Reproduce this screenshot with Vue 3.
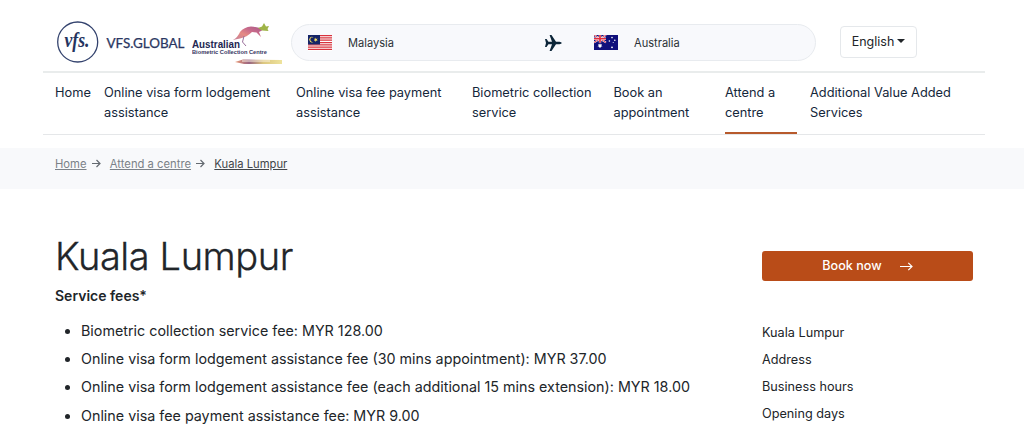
<script setup>
const nav = [
  { lines: ['Home'], width: 49 },
  { lines: ['Online visa form lodgement', 'assistance'], width: 192 },
  { lines: ['Online visa fee payment', 'assistance'], width: 176 },
  { lines: ['Biometric collection', 'service'], width: 141.5 },
  { lines: ['Book an', 'appointment'], width: 111.5 },
  { lines: ['Attend a', 'centre'], width: 85, active: true },
  { lines: ['Additional Value Added', 'Services'], width: 175 }
]
const fees = [
  'Biometric collection service fee: MYR 128.00',
  'Online visa form lodgement assistance fee (30 mins appointment): MYR 37.00',
  'Online visa form lodgement assistance fee (each additional 15 mins extension): MYR 18.00',
  'Online visa fee payment assistance fee: MYR 9.00'
]
const links = ['Kuala Lumpur', 'Address', 'Business hours', 'Opening days']
</script>

<template>
  <div class="page">
    <header class="top">
      <svg class="vfs" width="132" height="46" viewBox="0 0 132 46">
        <circle cx="21.7" cy="23" r="20" fill="#fff" stroke="#34436e" stroke-width="1.3" />
        <text x="8.5" y="28" class="script" textLength="25" lengthAdjust="spacingAndGlyphs">vfs.</text>
        <text x="50.5" y="28.5" class="brand" textLength="78" lengthAdjust="spacingAndGlyphs">VFS.GLOBAL</text>
      </svg>
      <svg class="abcc" width="94" height="46" viewBox="0 0 94 46">
        <defs>
          <linearGradient id="roo" x1="0" x2="1" y1="1" y2="0">
            <stop offset="0" stop-color="#c4809b" />
            <stop offset=".4" stop-color="#e58a84" />
            <stop offset=".65" stop-color="#c96b8b" />
            <stop offset="1" stop-color="#a85a87" />
          </linearGradient>
          <linearGradient id="tail" x1="0" x2="1">
            <stop offset="0" stop-color="#eb9b78" />
            <stop offset=".3" stop-color="#996582" />
            <stop offset=".6" stop-color="#dcc77f" />
            <stop offset="1" stop-color="#eee39d" />
          </linearGradient>
        </defs>
        <path d="M41 20 Q46 17 48 12 Q52 7 59 6.5 Q65 7 69 8.5 L70 10.5 L67 12 L69 17 L64.5 12.5 L60 12 Q55 17 48 18.5 Q44 19 41 20 Z" fill="url(#roo)" />
        <path d="M52 16 L50.5 22 L54 26" fill="none" stroke="#9a6f9b" stroke-width="1" />
        <path d="M66 8 L70 6.5 L72 3 L74 6.5 L77 6 L75.5 9 L76.5 11 L70 10.5 Z" fill="#9fb447" />
        <text x="0" y="27.5" class="au" textLength="48" lengthAdjust="spacingAndGlyphs">Australian</text>
        <text x="0" y="33.5" class="bio" textLength="75" lengthAdjust="spacingAndGlyphs">Biometric Collection Centre</text>
        <path d="M43 42 L51 39.5 L90 40 V44 L52 44 Z" fill="url(#tail)" />
        <path d="M50 41 H78" stroke="#fbf2e3" />
      </svg>
      <div class="route">
        <svg class="flag" width="24" height="16" viewBox="0 0 24 16">
          <rect width="24" height="16" fill="#fff" />
          <path d="M0 .6H24M0 2.9H24M0 5.2H24M0 7.5H24M0 9.8H24M0 12.1H24M0 14.4H24" stroke="#d8323d" stroke-width="1.25" />
          <rect width="12" height="9.5" fill="#152467" />
          <path d="M5.5 2.2A2.8 2.8 0 1 0 5.5 7A2.5 2.5 0 1 1 5.5 2.2Z" fill="#ffe45f" />
          <path d="M7.7 2.6l.5 1.3 1.4-.3-.8 1.1.8 1.2-1.4-.3-.5 1.3-.5-1.3-1.3.3.8-1.2-.8-1.1 1.3.3z" fill="#ffe45f" />
        </svg>
        <span class="from">Malaysia</span>
        <svg class="plane" width="17" height="16" viewBox="0 0 17 16">
          <path d="M0 4H1.6L3.4 6.8H7L4.6 0H6.5L11 6.8H14.4Q16.6 7.1 16.8 8Q16.6 8.9 14.4 9.2H11L6.5 16H4.6L7 9.2H3.4L1.6 12H0L1 8Z" fill="#0c2538" />
        </svg>
        <svg class="flag" width="24" height="15" viewBox="0 0 24 15">
          <rect width="24" height="15" fill="#10107b" />
          <path d="M0 0L12 7.5M12 0L0 7.5" stroke="#fff" stroke-width="1.7" />
          <path d="M0 0L12 7.5M12 0L0 7.5" stroke="#e02b3b" stroke-width=".9" />
          <path d="M6 0V7.5M0 3.75H12" stroke="#fff" stroke-width="2.5" />
          <path d="M6 0V7.5M0 3.75H12" stroke="#e02b3b" stroke-width="1.7" />
          <g fill="#fff">
            <path d="M6 8.3l.6 1.3 1.4-.3-.6 1.2 1.1.9-1.5.2-.1 1.4-.9-1-.9 1-.1-1.4-1.5-.2 1.1-.9-.6-1.2 1.4.3z" />
            <circle cx="18" cy="2.6" r=".8" /><circle cx="15.4" cy="6" r=".8" />
            <circle cx="20.8" cy="5.2" r=".8" /><circle cx="18" cy="12.3" r=".9" /><circle cx="19.2" cy="7.6" r=".5" />
          </g>
        </svg>
        <span class="to">Australia</span>
      </div>
      <button class="language">English<i class="caret"></i></button>
    </header>

    <nav class="nav">
      <div v-for="item in nav" :key="item.lines[0]" class="cell" :style="{ width: item.width + 'px' }">
        <a :class="['item', { active: item.active }]">
          <span v-for="line in item.lines" :key="line">{{ line }}</span>
        </a>
      </div>
    </nav>

    <div class="crumbs">
      <a>Home</a>
      <svg width="9" height="9" viewBox="0 0 9 9"><path d="M0 4.5H8M4.5 1L8 4.5L4.5 8" /></svg>
      <a>Attend a centre</a>
      <svg width="9" height="9" viewBox="0 0 9 9"><path d="M0 4.5H8M4.5 1L8 4.5L4.5 8" /></svg>
      <a class="here">Kuala Lumpur</a>
    </div>

    <main class="main">
      <section class="content">
        <h1>Kuala Lumpur</h1>
        <h2>Service fees*</h2>
        <ul>
          <li v-for="fee in fees" :key="fee">{{ fee }}</li>
        </ul>
      </section>
      <aside class="side">
        <button class="book"><span>Book now</span>
          <svg width="13" height="9" viewBox="0 0 13 9"><path d="M0 4.5H12M8.3 .8L12 4.5L8.3 8.2" /></svg>
        </button>
        <a v-for="link in links" :key="link" class="link">{{ link }}</a>
      </aside>
    </main>
  </div>
</template>

<style>
body { background: #fff; overflow: hidden; }
</style>

<style scoped>
.page { width: 1024px; height: 441px; overflow: hidden; font-family: Inter, "Liberation Sans", sans-serif; color: #212529; background: #fff; }
.top { box-sizing: border-box; height: 73px; margin: 0 39px 0 43px; padding-left: 13px; border-bottom: 2px solid #e9ecec; display: flex; align-items: flex-start; }
.vfs { margin-top: 19px; flex: none; }
.script { font: italic bold 20px "Liberation Serif", serif; fill: #25345f; }
.brand { font: 12.5px Lato, sans-serif; fill: #2b3762; stroke: #2b3762; stroke-width: .25px; }
.abcc { margin: 20px 0 0 4px; flex: none; }
.au { font: bold 10.5px "Liberation Sans", sans-serif; fill: #222651; }
.bio { font: bold 6px "Liberation Sans", sans-serif; fill: #37365f; }
.route { box-sizing: border-box; width: 525px; height: 37px; margin: 24px 0 0 5px; border: 1px solid #e8ebef; border-radius: 19px; background: #f8f9fc; display: flex; align-items: center; padding-left: 16px; font-size: 11.1px; flex: none; }
.from, .to { color: #2b3136; flex: none; }
.from { width: 197px; margin-left: 16px; }
.plane { margin-right: 32px; }
.to { margin-left: 16px; }
.language { box-sizing: border-box; width: 77px; height: 32px; margin: 26px 0 0 24px; padding: 0 0 1px; border: 1px solid #e5e8eb; border-radius: 4px; background: #fff; font: 12.5px Inter, sans-serif; color: #212529; display: flex; align-items: center; justify-content: center; }
.caret { border: 4px solid transparent; border-top-color: #212529; border-bottom: 0; margin: 0 0 2px 3px; }
.nav { box-sizing: border-box; height: 62px; margin: 0 39px 0 43px; padding: 10px 0 0 12px; border-bottom: 1px solid #e5e7e9; display: flex; }
.cell { flex: none; }
.item { display: block; height: 50px; font-size: 12.8px; line-height: 19.5px; color: #14273b; white-space: nowrap; }
.item span { display: block; }
.active { width: 72px; border-bottom: 2px solid #b75a2c; height: 49px; }
.crumbs { box-sizing: border-box; margin-top: 13px; height: 41px; padding: 0 0 10px 55px; background: #f8f9fb; display: flex; align-items: center; font-size: 11.25px; color: #7b8187; }
.crumbs a { text-decoration: underline; }
.crumbs svg { margin: 0 9px 0 5.3px; fill: none; stroke: #646a70; stroke-width: 1.2; }
.crumbs .here { color: #42464a; }
.main { display: flex; padding-left: 55px; }
.content { width: 707px; padding-top: 44px; }
h1 { margin: 0; font-size: 38px; line-height: 46px; font-weight: 300; letter-spacing: -.4px; -webkit-text-stroke: .3px #212529; }
h2 { margin: 6px 0 0; font-size: 14px; line-height: 21px; font-weight: 600; }
ul { margin: 11px 0 0; padding-left: 26px; font-size: 14.32px; line-height: 28.2px; white-space: nowrap; }
.side { width: 211px; padding-top: 62px; }
.book { width: 211px; height: 30px; margin: 0 0 38px; padding: 0 0 2px; border: 0; border-radius: 3px; background: #b94c18; color: #fff; font: 500 12.6px Inter, sans-serif; display: flex; align-items: center; justify-content: center; }
.book svg { margin: 3px 0 0 18px; fill: none; stroke: #fff; stroke-width: 1.2; }
.link { display: block; height: 27px; line-height: 27px; font-size: 12.7px; }
</style>
